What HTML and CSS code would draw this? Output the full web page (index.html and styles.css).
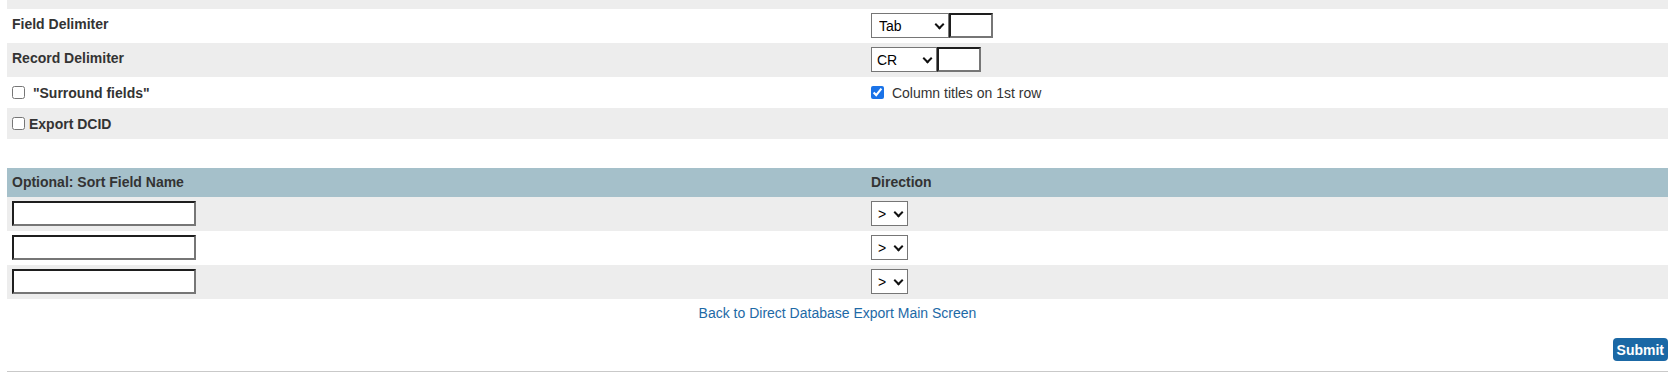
FILE: index.html
```html
<!DOCTYPE html>
<html lang="en">
<head>
    <meta charset="UTF-8">
    <title>Direct Database Export</title>
    <link rel="stylesheet" href="styles.css">
</head>
<body>
    <div class="page">
        <div class="options">
            <div class="row shade tail"></div>
            <div class="row">
                <div class="cell label">Field Delimiter</div>
                <div class="cell control">
                    <span class="select-wrap"><select class="select select-tab">
                        <option>Tab</option>
                        <option>Comma</option>
                        <option>Other</option>
                    </select></span><input type="text" class="delim-input">
                </div>
            </div>
            <div class="row shade">
                <div class="cell label">Record Delimiter</div>
                <div class="cell control">
                    <span class="select-wrap"><select class="select select-cr">
                        <option>CR</option>
                        <option>LF</option>
                        <option>CRLF</option>
                    </select></span><input type="text" class="delim-input">
                </div>
            </div>
            <div class="row check-row">
                <div class="cell check label"><input type="checkbox"> "Surround fields"</div>
                <div class="cell check"><input type="checkbox" checked> Column titles on 1st row</div>
            </div>
            <div class="row shade check-row">
                <div class="cell check label"><input type="checkbox">Export DCID</div>
                <div class="cell check"></div>
            </div>
        </div>

        <div class="sort-table">
            <div class="row head">
                <div class="cell">Optional: Sort Field Name</div>
                <div class="cell">Direction</div>
            </div>
            <div class="row shade">
                <div class="cell control"><input type="text" class="sort-input"></div>
                <div class="cell control">
                    <span class="select-wrap"><select class="select select-dir"><option>&gt;</option><option>&lt;</option></select></span>
                </div>
            </div>
            <div class="row">
                <div class="cell control"><input type="text" class="sort-input"></div>
                <div class="cell control">
                    <span class="select-wrap"><select class="select select-dir"><option>&gt;</option><option>&lt;</option></select></span>
                </div>
            </div>
            <div class="row shade">
                <div class="cell control"><input type="text" class="sort-input"></div>
                <div class="cell control">
                    <span class="select-wrap"><select class="select select-dir"><option>&gt;</option><option>&lt;</option></select></span>
                </div>
            </div>
        </div>

        <p class="back-link"><a href="#">Back to Direct Database Export Main Screen</a></p>

        <div class="actions">
            <button type="submit" class="btn-submit">Submit</button>
        </div>
    </div>
</body>
</html>
```

FILE: styles.css
```css
* {
    box-sizing: border-box;
}
body {
    margin: 0;
    font-family: "Liberation Sans", Arial, Helvetica, sans-serif;
    font-size: 14px;
    color: #333;
    background: #fff;
}
.page {
    margin: 0 9px 0 7px;
    border-bottom: 1px solid #c9c9c9;
}
.row {
    display: grid;
    grid-template-columns: 859px 1fr;
    height: 34px;
}
.shade {
    background: #ededed;
}
.tail {
    height: 9px;
}
.check-row {
    height: 31px;
}
.cell {
    padding: 4px 5px 0;
    line-height: 16px;
}
.label {
    font-weight: bold;
    padding-top: 7px;
}
.control {
    display: flex;
    align-items: flex-start;
}
.check {
    padding-top: 8px;
}
.check input[type="checkbox"] {
    width: 13px;
    height: 13px;
    margin: 0 4px 0 0;
    vertical-align: -1px;
    accent-color: #1a73e8;
}
.sort-table {
    margin-top: 29px;
}
.head {
    height: 29px;
    background: #a5c0ca;
    font-weight: bold;
}
.head .cell {
    padding-top: 6px;
}
.select-wrap {
    position: relative;
    display: inline-block;
}
.select-wrap::after {
    content: "";
    position: absolute;
    right: 6px;
    top: 8px;
    width: 5px;
    height: 5px;
    border-right: 2px solid #111;
    border-bottom: 2px solid #111;
    transform: rotate(45deg);
    pointer-events: none;
}
.select {
    appearance: none;
    -webkit-appearance: none;
    display: block;
    height: 25px;
    margin: 0;
    padding: 0 0 0 7px;
    border: 1px solid #767676;
    border-radius: 0;
    background: #fff;
    font-family: inherit;
    font-size: 14px;
    color: #000;
}
.select-tab {
    width: 78px;
}
.select-cr {
    width: 66px;
    padding-left: 5px;
}
.select-dir {
    width: 37px;
    padding-left: 6px;
}
.delim-input,
.sort-input {
    height: 25px;
    margin: 0;
    padding: 0 2px;
    border: 2px solid;
    border-color: #1e1e1e #767676 #767676 #1e1e1e;
    background: #fff;
    font-family: inherit;
    font-size: 14px;
}
.delim-input {
    width: 44px;
}
.sort-input {
    width: 184px;
}
.back-link {
    margin: 6px 0 0;
    text-align: center;
    line-height: 16px;
}
.back-link a {
    color: #1d69a6;
    text-decoration: none;
}
.actions {
    display: flex;
    justify-content: flex-end;
    margin-top: 17px;
    padding-bottom: 10px;
}
.btn-submit {
    height: 23px;
    padding: 0 4px;
    border: none;
    border-radius: 4px;
    background: #1b68a5;
    color: #fff;
    font-family: inherit;
    font-size: 14px;
    font-weight: bold;
    cursor: pointer;
}
.btn-submit:hover {
    background: #155a90;
}
```
